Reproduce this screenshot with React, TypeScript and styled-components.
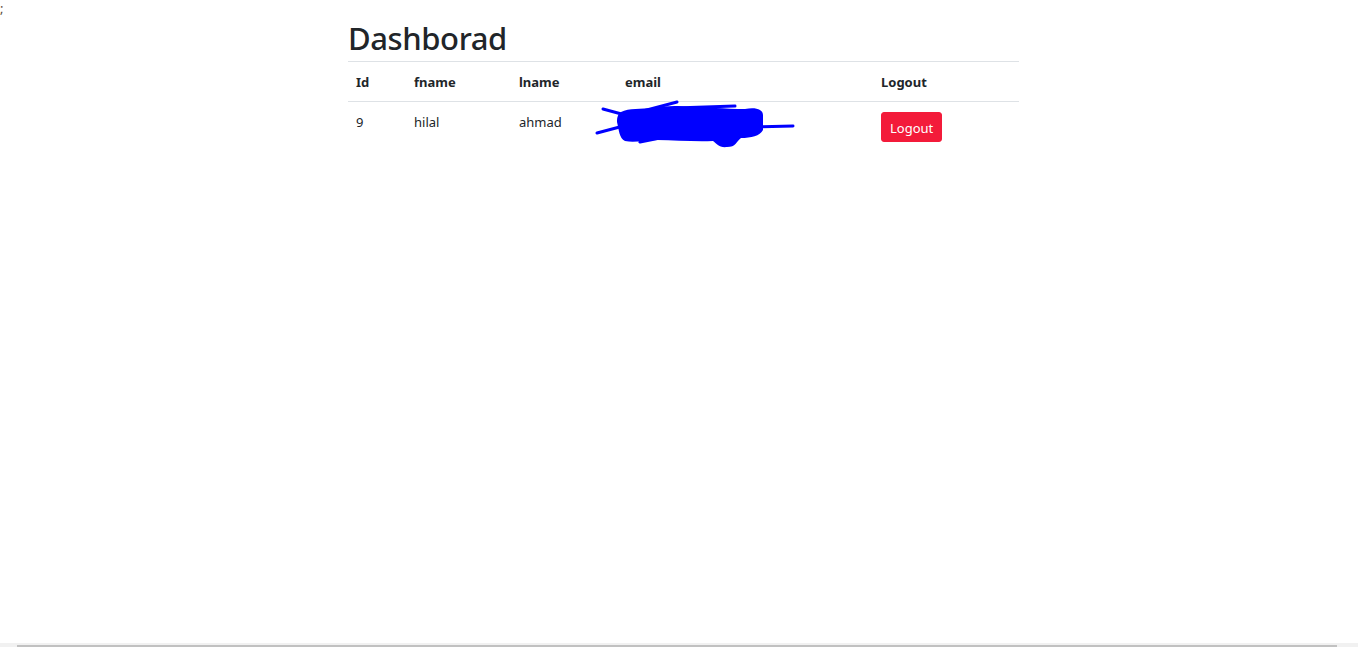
import React from "react";
import styled, { createGlobalStyle } from "styled-components";

const Global = createGlobalStyle`
  html, body { margin: 0; padding: 0; background: #fff; }
  body {
    font-family: "Noto Sans", "Open Sans", sans-serif;
    color: #212529;
    overflow: hidden;
  }
`;

const Stray = styled.div`
  font-family: "Noto Sans", sans-serif;
  font-size: 13px;
  line-height: 16px;
  height: 16px;
  color: #5a4a3a;
`;

const Container = styled.div`
  width: 671px;
  margin-left: 348px;
`;

const Title = styled.h1`
  font-size: 31px;
  font-weight: 500;
  line-height: 38px;
  margin: 3px 0 4px 0;
  letter-spacing: -0.4px;
  color: #212529;
`;

const Table = styled.table`
  width: 671px;
  table-layout: fixed;
  border-collapse: collapse;
  font-size: 13px;
  color: #212529;
`;

const HeadCell = styled.th<{ $w: number }>`
  box-sizing: border-box;
  width: ${(p) => p.$w}px;
  text-align: left;
  font-weight: 700;
  padding: 9px 8px 7px 8px;
  line-height: 23px;
  border-top: 1px solid #dee2e6;
  border-bottom: 1px solid #dee2e6;
`;

const Cell = styled.td`
  position: relative;
  padding: 8px;
  line-height: 24px;
  vertical-align: top;
`;

const Scribble = styled.svg`
  position: absolute;
  left: -22px;
  top: -2px;
`;

const DangerButton = styled.button`
  margin-top: 2px;
  font-family: inherit;
  font-size: 13px;
  line-height: 20px;
  padding: 5px 8px 3px 8px;
  color: #fff;
  background: #f31b3a;
  border: 1px solid #f31b3a;
  border-radius: 3px;
  cursor: pointer;
`;

const ScrollTrack = styled.div`
  position: fixed;
  left: 0;
  right: 0;
  bottom: 0;
  height: 4px;
  background: #f1f1f1;
`;

const ScrollThumb = styled.div`
  margin-left: 17px;
  margin-top: 2px;
  width: 1320px;
  height: 2px;
  background: #c1c1c1;
`;

export default function App() {
  return (
    <>
      <Global />
      <Stray>;</Stray>
      <Container>
        <Title>Dashborad</Title>
        <Table>
          <thead>
            <tr>
              <HeadCell $w={58}>Id</HeadCell>
              <HeadCell $w={105}>fname</HeadCell>
              <HeadCell $w={106}>lname</HeadCell>
              <HeadCell $w={256}>email</HeadCell>
              <HeadCell $w={146}>Logout</HeadCell>
            </tr>
          </thead>
          <tbody>
            <tr>
              <Cell>9</Cell>
              <Cell>hilal</Cell>
              <Cell>ahmad</Cell>
              <Cell>
                <Scribble width="200" height="48" viewBox="0 0 200 48">
                  <path
                    d="M26,12 C34,8 46,9 58,8 C70,6 80,5 95,7 C110,7 130,9 150,9 C160,7 168,9 168,15 L168,30 C165,36 156,38 146,38 C141,42 141,47 132,47 C124,48 121,43 118,41 C100,42 80,40 62,40 C50,40 40,43 30,41 C24,38 24,30 22,22 C22,17 23,14 26,12 Z"
                    fill="#0000ff"
                  />
                  <g stroke="#0000ff" strokeWidth="3" strokeLinecap="round" fill="none">
                    <path d="M8,9 L45,19" />
                    <path d="M2,33 L36,24" />
                    <path d="M150,27 L198,26" />
                    <path d="M48,11 L82,2" />
                    <path d="M80,8 L140,6" />
                    <path d="M45,42 L85,34" />
                  </g>
                </Scribble>
              </Cell>
              <Cell>
                <DangerButton>Logout</DangerButton>
              </Cell>
            </tr>
          </tbody>
        </Table>
      </Container>
      <ScrollTrack>
        <ScrollThumb />
      </ScrollTrack>
    </>
  );
}
